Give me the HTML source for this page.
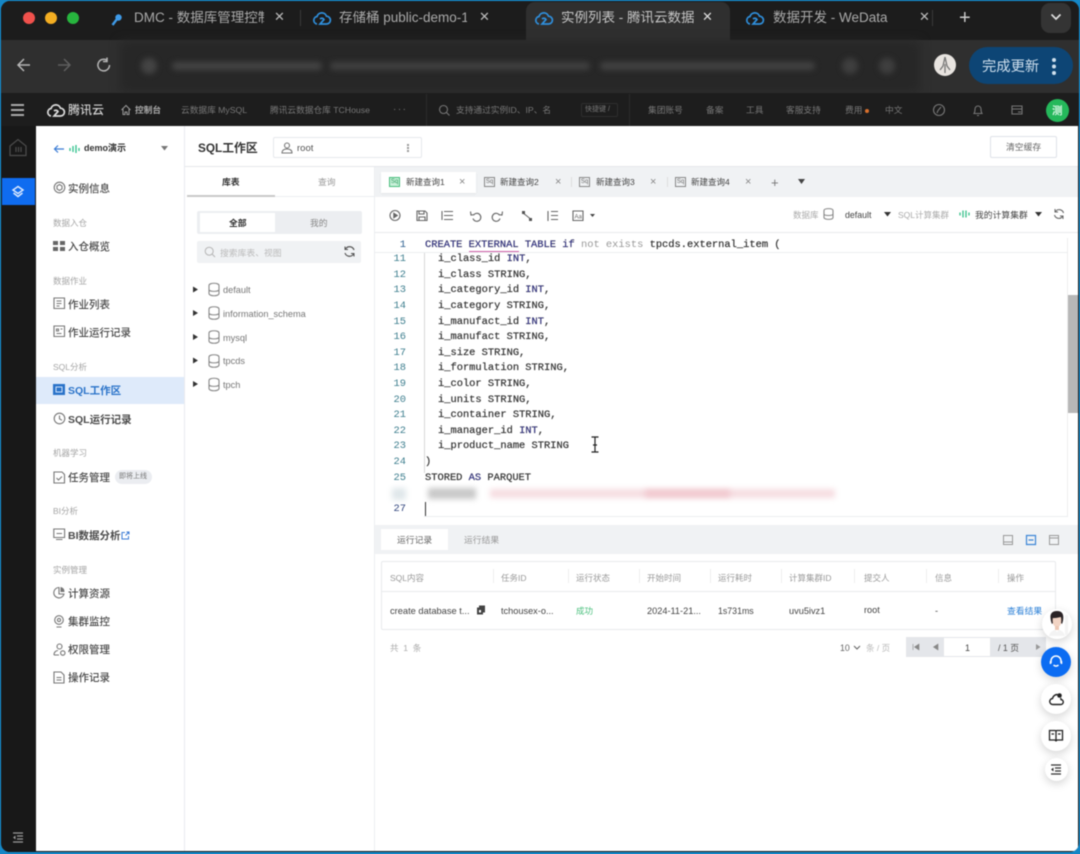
<!DOCTYPE html>
<html lang="zh"><head><meta charset="utf-8"><title>实例列表 - 腾讯云数据仓库</title>
<style>
*{box-sizing:border-box}
html,body{margin:0;padding:0;width:1080px;height:854px;overflow:hidden;background:#1587c6}
body{font-family:"Liberation Sans","Noto Sans CJK SC",sans-serif;position:relative}
#w{position:absolute;left:1px;top:1px;width:1078px;height:851px;background:#1b1b1b;border-radius:9px;overflow:hidden;filter:blur(.55px)}
#a{position:absolute;left:-1px;top:-1px;width:1080px;height:854px}
.t,.b{position:absolute;white-space:nowrap}
.t{line-height:14px}
.tab{color:#a9a9a9;font-size:13.5px;margin-top:1px}
.nav{color:#777;font-size:8.7px}
.m{color:#4a4a4a;font-size:10.5px;left:68px;font-weight:500;margin-top:1px}
.g{color:#a4a4a4;font-size:8.5px;left:53px}
.db{color:#777;font-size:9.2px;left:223px}
.q{color:#444;font-size:8.5px}
.x{color:#888;font-size:11px}
.c{font-family:"Liberation Mono",monospace;font-size:10.4px;color:#333;left:425px;line-height:15.6px;-webkit-text-stroke:.2px #333;margin-top:1.3px}
.n{font-family:"Liberation Mono",monospace;font-size:10.4px;color:#3f7f8f;left:387px;width:19px;text-align:right;line-height:15.6px;margin-top:1.3px}
.k{color:#2e2e9c}
.h{color:#999;font-size:8.5px}
.d{color:#444;font-size:9.2px}
svg{position:absolute;overflow:visible}
.i{fill:none;stroke:#777;stroke-width:1.1}
.fab{position:absolute;border-radius:50%;background:#fff;box-shadow:0 3px 9px rgba(0,0,0,.17)}
</style></head><body>
<div id="w"><div id="a">

<!-- tab strip -->
<div class="b" style="left:0;top:0;width:1080px;height:40px;background:#1c1c1c"></div>
<div class="b" style="left:23px;top:12px;width:12px;height:12px;border-radius:50%;background:#f0514c"></div>
<div class="b" style="left:45px;top:12px;width:12px;height:12px;border-radius:50%;background:#f4ae22"></div>
<div class="b" style="left:67px;top:12px;width:12px;height:12px;border-radius:50%;background:#27b53e"></div>
<svg style="left:109px;top:12px" width="16" height="16"><circle cx="9.5" cy="5.5" r="3.2" fill="#3f9be8"/><path d="M8 7 3.5 13" stroke="#3f9be8" stroke-width="2.4" fill="none"/></svg>
<div class="t tab" style="left:134px;top:10px;width:130px;overflow:hidden">DMC - 数据库管理控制台</div>
<div class="t" style="left:274px;top:10px;color:#bbb;font-size:13px">✕</div>
<div class="b" style="left:300px;top:10px;width:1px;height:16px;background:#3a3a3a"></div>
<svg style="left:312px;top:10px" width="20" height="16"><path d="M5 14a3.800 3.800 0 0 1 0-7.500 5 5 0 0 1 9.500-.3 3.900 3.900 0 0 1 0 7.800H8l4-4.500a2.500 2.500 0 0 0-4-.5" fill="none" stroke="#2f8fdc" stroke-width="1.700"/></svg>
<div class="t tab" style="left:339px;top:10px;width:128px;overflow:hidden">存储桶 public-demo-1</div>
<div class="t" style="left:479px;top:10px;color:#bbb;font-size:13px">✕</div>
<div class="b" style="left:526px;top:2px;width:204px;height:38px;background:#2f2f2f;border-radius:9px 9px 0 0"></div>
<svg style="left:534px;top:10px" width="20" height="16"><path d="M5 14a3.800 3.800 0 0 1 0-7.500 5 5 0 0 1 9.500-.3 3.900 3.900 0 0 1 0 7.800H8l4-4.500a2.500 2.500 0 0 0-4-.5" fill="none" stroke="#2f8fdc" stroke-width="1.700"/></svg>
<div class="t tab" style="left:561px;top:10px;width:134px;overflow:hidden;color:#c4c4c4">实例列表 - 腾讯云数据仓库</div>
<div class="t" style="left:702px;top:10px;color:#ddd;font-size:13px">✕</div>
<svg style="left:745px;top:10px" width="20" height="16"><path d="M5 14a3.800 3.800 0 0 1 0-7.500 5 5 0 0 1 9.500-.3 3.900 3.900 0 0 1 0 7.800H8l4-4.500a2.500 2.500 0 0 0-4-.5" fill="none" stroke="#2f8fdc" stroke-width="1.700"/></svg>
<div class="t tab" style="left:773px;top:10px">数据开发 - WeData</div>
<div class="t" style="left:919px;top:10px;color:#bbb;font-size:13px">✕</div>
<div class="b" style="left:932px;top:10px;width:1px;height:16px;background:#3a3a3a"></div>
<div class="t" style="left:959px;top:10px;color:#ccc;font-size:20px;line-height:16px">+</div>
<div class="b" style="left:1041px;top:3px;width:30px;height:30px;border-radius:9px;background:#343434"></div>
<svg style="left:1050px;top:13px" width="12" height="8"><path d="M1.500 1.500 6 6l4.500-4.500" fill="none" stroke="#ddd" stroke-width="1.700"/></svg>

<!-- toolbar -->
<div class="b" style="left:0;top:40px;width:1080px;height:53px;background:#2f2f2f"></div>
<svg style="left:16px;top:57px" width="16" height="16"><path d="M14 8H2.500M8 2 2 8l6 6" fill="none" stroke="#b5b5b5" stroke-width="1.500"/></svg>
<svg style="left:56px;top:57px" width="16" height="16"><path d="M2 8h11.500M8 2l6 6-6 6" fill="none" stroke="#5e5e5e" stroke-width="1.500"/></svg>
<svg style="left:96px;top:57px" width="16" height="16"><path d="M13.500 8A5.800 5.800 0 1 1 11 3.300M11 .5v4H7" fill="none" stroke="#b5b5b5" stroke-width="1.500"/></svg>
<div class="b" style="left:120px;top:41px;width:800px;height:51px;background:#272727;filter:blur(5px)"></div>
<div class="b" style="left:141px;top:58px;width:16px;height:16px;border-radius:50%;background:#444;filter:blur(3px)"></div>
<div class="b" style="left:172px;top:62px;width:150px;height:8px;border-radius:4px;background:#444;filter:blur(3px)"></div>
<div class="b" style="left:330px;top:62px;width:260px;height:8px;border-radius:4px;background:#404040;filter:blur(3px)"></div>
<div class="b" style="left:600px;top:62px;width:215px;height:8px;border-radius:4px;background:#424242;filter:blur(3px)"></div>
<div class="b" style="left:842px;top:58px;width:16px;height:16px;border-radius:50%;background:#3f3f3f;filter:blur(3px)"></div>
<div class="b" style="left:879px;top:58px;width:16px;height:16px;border-radius:50%;background:#3f3f3f;filter:blur(3px)"></div>
<div class="b" style="left:934px;top:54px;width:22px;height:22px;border-radius:50%;background:#e8e4e0"></div>
<svg style="left:934px;top:54px" width="22" height="22"><path d="M11 3 9 12l-3 4M11 3l2 9 3 4M11 10v9" fill="none" stroke="#777" stroke-width="1.300"/></svg>
<div class="b" style="left:969px;top:47px;width:104px;height:37px;border-radius:19px;background:#0d4575"></div>
<div class="t" style="left:982px;top:57px;margin-top:1.500px;color:#cfe0ee;font-size:14.300px;line-height:17px">完成更新</div>
<div class="b" style="left:1052px;top:58px;width:4px;height:4px;border-radius:50%;background:#cfe0ee;box-shadow:0 6.500px 0 #cfe0ee,0 13px 0 #cfe0ee"></div>

<!-- nav bar -->
<div class="b" style="left:0;top:93px;width:1080px;height:33px;background:#1d1d1d"></div>
<div class="b" style="left:11px;top:104px;width:13px;height:1.500px;background:#aaa;box-shadow:0 5px 0 #aaa,0 10px 0 #aaa"></div>
<svg style="left:46px;top:102px" width="20" height="16"><path d="M5 14a3.800 3.800 0 0 1 0-7.500 5 5 0 0 1 9.500-.3 3.900 3.900 0 0 1 0 7.800H8l4-4.500a2.500 2.500 0 0 0-4-.5" fill="none" stroke="#ddd" stroke-width="1.700"/></svg>
<div class="t" style="left:68px;top:103px;color:#cfcfcf;font-size:12px;font-weight:500">腾讯云</div>
<svg style="left:120px;top:104px" width="12" height="12"><path d="M1.500 6 6 1.500 10.500 6M3 5v5.500h2V8h2v2.500h2V5" fill="none" stroke="#999" stroke-width="1"/></svg>
<div class="t" style="left:135px;top:103px;color:#aaa;font-size:8.700px;font-weight:700">控制台</div>
<div class="t nav" style="left:181px;top:103px">云数据库 MySQL</div>
<div class="t nav" style="left:270px;top:103px">腾讯云数据仓库 TCHouse</div>
<div class="t nav" style="left:393px;top:103px;font-size:10px;letter-spacing:1.500px">···</div>
<div class="b" style="left:426px;top:94px;width:1px;height:32px;background:#2b2b2b"></div>
<svg style="left:438px;top:104px" width="13" height="13"><circle cx="5.500" cy="5.500" r="4" class="i" stroke="#666"/><path d="m8.500 8.500 3 3" class="i"/></svg>
<div class="t nav" style="left:456px;top:103px;width:106px;overflow:hidden">支持通过实例ID、IP、名</div>
<div class="b" style="left:581px;top:103px;width:37px;height:14px;border:1px solid #2e2e2e;border-radius:2px"></div>
<div class="t nav" style="left:585px;top:103px;font-size:7px">快捷键 /</div>
<div class="b" style="left:629px;top:94px;width:1px;height:32px;background:#2b2b2b"></div>
<div class="t nav" style="left:648px;top:103px">集团账号</div>
<div class="t nav" style="left:706px;top:103px">备案</div>
<div class="t nav" style="left:746px;top:103px">工具</div>
<div class="t nav" style="left:786px;top:103px">客服支持</div>
<div class="t nav" style="left:845px;top:103px">费用</div>
<div class="b" style="left:865px;top:109px;width:4px;height:4px;border-radius:50%;background:#d9702c"></div>
<div class="t nav" style="left:885px;top:103px">中文</div>
<svg style="left:932px;top:103px" width="14" height="14"><circle cx="7" cy="7" r="5.500" class="i"/><path d="M9 4 6 7.500 5 10" class="i"/></svg>
<svg style="left:971px;top:103px" width="14" height="14"><path d="M3 10.500c1-1.500 1-2.500 1-4.500a3 3 0 0 1 6 0c0 2 0 3 1 4.500zM6 12.500h2" class="i"/></svg>
<svg style="left:1010px;top:103px" width="14" height="14"><path d="M2 3h10v8H2zM2 6h10M8 9h3" class="i"/></svg>
<div class="b" style="left:1046px;top:99px;width:23px;height:23px;border-radius:50%;background:#25b85b"></div>
<div class="t" style="left:1052px;top:104px;color:#d7f5e3;font-size:10.500px;font-weight:700">测</div>

<!-- left rail -->
<div class="b" style="left:2px;top:126px;width:34px;height:728px;background:#181818"></div>
<svg style="left:9px;top:138px" width="18" height="19"><path d="M1 8 9 1.500 17 8v9.500H1zM7 9v5M9.500 9v5M12 9v5" fill="none" stroke="#4c4c4c" stroke-width="1.200"/></svg>
<div class="b" style="left:2px;top:178px;width:33px;height:27px;background:#0f6cf0"></div>
<svg style="left:11px;top:185px" width="14" height="14"><path d="M7 1.500 12 5 7 8.500 2 5zM2.500 8 7 11.500 11.500 8" fill="none" stroke="#dbe9ff" stroke-width="1.500"/></svg>
<svg style="left:12px;top:832px" width="12" height="11"><path d="M1 1h10M5 4h6M5 7h6M1 10h10" stroke="#999" stroke-width="1.200"/><path d="M3.500 3.500v4L1 5.500z" fill="#999"/></svg>

<!-- sidebar -->
<div class="b" style="left:36px;top:126px;width:149px;height:725px;background:#fff;border-right:1px solid #e8eaef"></div>
<svg style="left:53px;top:144px" width="12" height="10"><path d="M11 5H2M5 1.500 1.500 5 5 8.500" fill="none" stroke="#3a7bd5" stroke-width="1.200"/></svg>
<svg style="left:69px;top:144px" width="11" height="10"><path d="M1 4v3M4 2v6" stroke="#2cc08a" stroke-width="1.300"/><path d="M7 1v8" stroke="#2cc08a" stroke-width="1.300"/><path d="M10 4v3" stroke="#2cc08a" stroke-width="1.300"/></svg>
<div class="t" style="left:84px;top:141px;color:#333;font-size:9px;font-weight:700">demo演示</div>
<svg style="left:161px;top:146px" width="7" height="5"><path d="M0 0h7L3.500 4.500z" fill="#777"/></svg>

<svg style="left:53px;top:181px" width="13" height="13"><circle cx="6.500" cy="6.500" r="5.300" class="i"/><path d="M6.500 3.500 9 5v3L6.500 9.500 4 8V5z" class="i"/></svg>
<div class="t m" style="top:181px">实例信息</div>
<div class="t g" style="top:216px">数据入仓</div>
<svg style="left:53px;top:241px" width="12" height="11"><path d="M0 0h5v4H0zM7 0h5v4H7zM0 6h5v4H0zM7 6h5v4H7z" fill="#666"/></svg>
<div class="t m" style="top:239px">入仓概览</div>
<div class="t g" style="top:274px">数据作业</div>
<svg style="left:53px;top:297px" width="13" height="13"><path d="M1 1h10.500v10.500H1zM3.500 6.500h5M3.500 4h5M3.500 9h3" class="i"/></svg>
<div class="t m" style="top:297px">作业列表</div>
<svg style="left:53px;top:325px" width="13" height="13"><path d="M1 1h10.500v10.500H1zM3.500 4h2v2h-2zM3.500 8.500h5M7.500 4h2" class="i"/></svg>
<div class="t m" style="top:325px">作业运行记录</div>
<div class="t g" style="top:360px">SQL分析</div>
<div class="b" style="left:36px;top:377px;width:148px;height:27px;background:#deeafa"></div>
<svg style="left:53px;top:384px" width="12" height="12"><path d="M0 0h12v11H0z" fill="#2a73c9"/><path d="M3 3v5h6V3z" fill="none" stroke="#cfe2fa" stroke-width="1"/></svg>
<div class="t m" style="top:383px;color:#2a73c9;font-weight:700">SQL工作区</div>
<svg style="left:53px;top:412px" width="13" height="13"><circle cx="6.500" cy="6.500" r="5.300" class="i"/><path d="M6.500 3.500v3.300l2.500 1.500" class="i"/></svg>
<div class="t m" style="top:412px;font-weight:700">SQL运行记录</div>
<div class="t g" style="top:446px">机器学习</div>
<svg style="left:53px;top:471px" width="13" height="13"><path d="M1 1h8l2.500 2.500v8.500H1zM3.500 7 5.500 9l3.500-3.500" class="i"/></svg>
<div class="t m" style="top:470px">任务管理</div>
<div class="b" style="left:115px;top:470px;width:37px;height:14px;border-radius:7px;background:#ebedf1"></div>
<div class="t" style="left:119px;top:470px;color:#777;font-size:7px">即将上线</div>
<div class="t g" style="top:504px">BI分析</div>
<svg style="left:53px;top:528px" width="13" height="13"><path d="M.8 1h10.800v8.500H.8zM3 11.500h6.500M3.500 5.500h5.500" class="i"/></svg>
<div class="t m" style="top:528px;font-weight:700">BI数据分析</div>
<svg style="left:121px;top:531px" width="9" height="9"><path d="M4 1.500H1V8h6.500V5M4.500 4.500 8 1M5.500 1H8v2.500" fill="none" stroke="#3a7bd5" stroke-width="1"/></svg>
<div class="t g" style="top:563px">实例管理</div>
<svg style="left:53px;top:586px" width="12" height="13"><path d="M6 1.500a5.200 5.200 0 1 0 5 6.500H6z" class="i"/><path d="M7.500 1a4.500 4.500 0 0 1 4 5h-4z" fill="#777"/></svg>
<div class="t m" style="top:586px">计算资源</div>
<svg style="left:53px;top:615px" width="12" height="13"><circle cx="6" cy="5" r="4.300" class="i"/><circle cx="6" cy="5" r="1.600" class="i"/><path d="M3.500 12h5" class="i"/></svg>
<div class="t m" style="top:614px">集群监控</div>
<svg style="left:53px;top:643px" width="13" height="13"><circle cx="6.500" cy="3.500" r="2.500" class="i"/><path d="M1 12c0-3 2-4.500 4-4.500M1 12h5" class="i"/><circle cx="9.800" cy="10" r="2.200" class="i"/></svg>
<div class="t m" style="top:642px">权限管理</div>
<svg style="left:53px;top:671px" width="12" height="13"><path d="M1 1h7l3 3v8H1zM3.500 6.500h5M3.500 9h5" class="i"/></svg>
<div class="t m" style="top:670px">操作记录</div>

<!-- white content -->
<div class="b" style="left:185px;top:126px;width:893px;height:725px;background:#fff"></div>
<div class="t" style="left:198px;top:141px;color:#333;font-size:11.800px;font-weight:700">SQL工作区</div>
<div class="b" style="left:273px;top:137px;width:149px;height:21px;border:1px solid #e6e8ec;border-radius:2px"></div>
<svg style="left:281px;top:142px" width="12" height="12"><circle cx="6" cy="3.500" r="2.500" class="i"/><path d="M1 11c0-3 2-4 5-4s5 1 5 4z" class="i"/></svg>
<div class="t" style="left:297px;top:142px;color:#555;font-size:9.500px">root</div>
<div class="b" style="left:407px;top:144px;width:2px;height:2px;background:#999;box-shadow:0 3px 0 #999,0 6px 0 #999"></div>
<div class="b" style="left:990px;top:136px;width:67px;height:22px;border:1px solid #dfe2e8;border-radius:2px"></div>
<div class="t" style="left:1006px;top:140px;color:#666;font-size:8.800px">清空缓存</div>
<div class="b" style="left:185px;top:166px;width:893px;height:1px;background:#e5e7eb"></div>

<!-- db panel -->
<div class="t" style="left:222px;top:175px;color:#333;font-size:8.800px;font-weight:700">库表</div>
<div class="t" style="left:318px;top:175px;color:#999;font-size:8.800px">查询</div>
<div class="b" style="left:187px;top:195px;width:88px;height:2px;background:#c9c9c9"></div>
<div class="b" style="left:275px;top:196px;width:99px;height:1px;background:#eceef1"></div>
<div class="b" style="left:374px;top:167px;width:1px;height:684px;background:#eceef1"></div>
<div class="b" style="left:197px;top:211px;width:165px;height:23px;background:#eceef1;border-radius:2px"></div>
<div class="b" style="left:200px;top:213px;width:75px;height:19px;background:#fff"></div>
<div class="t" style="left:229px;top:216px;color:#333;font-size:8.800px;font-weight:700">全部</div>
<div class="t" style="left:310px;top:216px;color:#888;font-size:8.800px">我的</div>
<div class="b" style="left:197px;top:241px;width:164px;height:22px;background:#f0f2f4;border-radius:2px"></div>
<svg style="left:204px;top:246px" width="12" height="12"><circle cx="5.200" cy="5.200" r="4" fill="none" stroke="#b5b5b5" stroke-width="1"/><path d="m8 8 3 3" stroke="#b5b5b5" stroke-width="1"/></svg>
<div class="t" style="left:220px;top:246px;color:#bbb;font-size:8.800px">搜索库表、视图</div>
<svg style="left:343px;top:245px" width="13" height="13"><path d="M11 5a4.700 4.700 0 0 0-8.500-1M2 8a4.700 4.700 0 0 0 8.500 1" fill="none" stroke="#555" stroke-width="1.200"/><path d="M2 1.500v3h3M11 11.500v-3H8" fill="none" stroke="#555" stroke-width="1"/></svg>

<svg style="left:0;top:0" width="375" height="400">
<g fill="#333"><path d="M193 286.500v6l5-3zM193 310v6l5-3zM193 334v6l5-3zM193 357.500v6l5-3zM193 381v6l5-3z"/></g>
<g fill="none" stroke="#888" stroke-width="1.100">
<path d="M209 285.500c0-3 10-3 10 0v8c0 3-10 3-10 0zM209 289.500c0 2.500 10 2.500 10 0"/>
<path d="M209 309c0-3 10-3 10 0v8c0 3-10 3-10 0zM209 313c0 2.500 10 2.500 10 0"/>
<path d="M209 333c0-3 10-3 10 0v8c0 3-10 3-10 0zM209 337c0 2.500 10 2.500 10 0"/>
<path d="M209 357c0-3 10-3 10 0v8c0 3-10 3-10 0zM209 361c0 2.500 10 2.500 10 0"/>
<path d="M209 380.500c0-3 10-3 10 0v8c0 3-10 3-10 0zM209 384.500c0 2.500 10 2.500 10 0"/>
</g></svg>
<div class="t db" style="top:283px">default</div>
<div class="t db" style="top:307px">information_schema</div>
<div class="t db" style="top:331px">mysql</div>
<div class="t db" style="top:354px">tpcds</div>
<div class="t db" style="top:378px">tpch</div>

<!-- query tabs -->
<div class="b" style="left:375px;top:167px;width:703px;height:30px;background:#f0f2f4"></div>
<div class="b" style="left:381px;top:172px;width:95px;height:21px;background:#fff;box-shadow:0 1px 2px rgba(0,0,0,.06)"></div>
<div class="t" style="left:389px;top:177px;width:11px;height:10px;border:1px solid #47bd7c;background:#c9f0d9;color:#279a5b;font-size:6px;line-height:8px;text-align:center">Sq</div>
<div class="t q" style="left:406px;top:175px">新建查询1</div><div class="t x" style="left:459px;top:175px">×</div>
<div class="t" style="left:484px;top:177px;width:11px;height:10px;border:1px solid #888;color:#666;font-size:6px;line-height:8px;text-align:center">Sq</div>
<div class="t q" style="left:500px;top:175px">新建查询2</div><div class="t x" style="left:555px;top:175px">×</div>
<div class="b" style="left:571px;top:177px;width:1px;height:10px;background:#ddd"></div>
<div class="t" style="left:579px;top:177px;width:11px;height:10px;border:1px solid #888;color:#666;font-size:6px;line-height:8px;text-align:center">Sq</div>
<div class="t q" style="left:596px;top:175px">新建查询3</div><div class="t x" style="left:650px;top:175px">×</div>
<div class="b" style="left:667px;top:177px;width:1px;height:10px;background:#ddd"></div>
<div class="t" style="left:675px;top:177px;width:11px;height:10px;border:1px solid #888;color:#666;font-size:6px;line-height:8px;text-align:center">Sq</div>
<div class="t q" style="left:691px;top:175px">新建查询4</div><div class="t x" style="left:745px;top:175px">×</div>
<div class="t" style="left:771px;top:176px;color:#777;font-size:13px">+</div>
<svg style="left:798px;top:179px" width="8" height="6"><path d="M0 0h7L3.500 5z" fill="#444"/></svg>

<!-- editor toolbar -->
<svg style="left:389px;top:209px" width="210" height="14">
<g fill="none" stroke="#666" stroke-width="1.100">
<circle cx="6" cy="6.500" r="5"/><path d="M4.800 4.300v4.400l3.500-2.200z" fill="#666"/>
<path d="M28 2h8l2 2v7.500H28zM30 2v3h5V2M30 11.500V8h6v3.500"/>
<path d="M55 2.500h9M55 6.500h9M55 10.500h9M53 2v9"/>
<path d="M85 5.500a4 4 0 1 1-1 4M81.500 2.500l.5 3.500 3.500-.3"/>
<path d="M110 5.500a4 4 0 1 0 1 4M113.500 2.500l-.5 3.500-3.500-.3"/>
<path d="M134 4l2 1.500 5 4"/>
<path d="M159 2v10M162 2.500h7M162 6.500h7M162 10.500h7"/>
<path d="M184 2h10v9.500h-10z"/></g>
<text x="185.500" y="9.500" font-size="6" fill="#666" font-family="Liberation Sans">Aa</text>
<path d="M201 5h5l-2.500 3z" fill="#444"/><path d="M133 2h3v3h-3zM140 9h3v3h-3z" fill="#555"/>
</svg>
<div class="t h" style="left:793px;top:208px;color:#aaa">数据库</div>
<svg style="left:823px;top:208px" width="11" height="12"><path d="M1 2.500c0-2.500 9-2.500 9 0v7c0 2.500-9 2.500-9 0zM1 6c0 2 9 2 9 0" fill="none" stroke="#888" stroke-width="1.100"/></svg>
<div class="t" style="left:845px;top:208px;color:#444;font-size:8.800px;font-weight:500">default</div>
<svg style="left:884px;top:212px" width="7" height="5"><path d="M0 0h7L3.500 4.500z" fill="#333"/></svg>
<div class="t h" style="left:898px;top:208px;color:#aaa">SQL计算集群</div>
<svg style="left:959px;top:209px" width="11" height="10"><path d="M1 3.500v3M4 1.500v7M7 1.500v7M10 3.500v3" stroke="#36c08a" stroke-width="1.300"/></svg>
<div class="t" style="left:975px;top:208px;color:#444;font-size:8.800px">我的计算集群</div>
<svg style="left:1035px;top:212px" width="7" height="5"><path d="M0 0h7L3.500 4.500z" fill="#333"/></svg>
<svg style="left:1053px;top:208px" width="12" height="12"><path d="M10.500 5A4.500 4.500 0 0 0 2.500 3.500M1.500 7a4.500 4.500 0 0 0 8 1.500" fill="none" stroke="#666" stroke-width="1.100"/><path d="M2 1v3h3M10 11V8H7" fill="none" stroke="#666" stroke-width="1"/></svg>
<div class="b" style="left:375px;top:232px;width:703px;height:1px;background:#e8eaed"></div>

<!-- editor -->
<div class="b" style="left:375px;top:252px;width:692px;height:1px;background:#eceef0"></div>
<div class="b" style="left:424px;top:253px;width:1px;height:220px;background:#d8d8d8"></div>
<div class="t n" style="top:237px;color:#2c5f8f">1</div>
<div class="t c" style="top:237px"><span style="color:#2e2e9c">CREATE</span> <span style="color:#2e2e9c;border-bottom:1px solid #cf5fa8">EXTERNAL</span> <span style="color:#2e2e9c">TABLE</span> <span style="color:#2e2e9c">if</span> <span style="color:#999;-webkit-text-stroke:0">not exists</span> tpcds.external_item (</div>
<div class="t n" style="top:251px">11</div><div class="t c" style="top:251px;left:438px">i_class_id <span class="k">INT</span>,</div>
<div class="t n" style="top:266.600px">12</div><div class="t c" style="top:266.600px;left:438px">i_class STRING,</div>
<div class="t n" style="top:282.200px">13</div><div class="t c" style="top:282.200px;left:438px">i_category_id <span class="k">INT</span>,</div>
<div class="t n" style="top:297.800px">14</div><div class="t c" style="top:297.800px;left:438px">i_category STRING,</div>
<div class="t n" style="top:313.400px">15</div><div class="t c" style="top:313.400px;left:438px">i_manufact_id <span class="k">INT</span>,</div>
<div class="t n" style="top:329px">16</div><div class="t c" style="top:329px;left:438px">i_manufact STRING,</div>
<div class="t n" style="top:344.600px">17</div><div class="t c" style="top:344.600px;left:438px">i_size STRING,</div>
<div class="t n" style="top:360.200px">18</div><div class="t c" style="top:360.200px;left:438px">i_formulation STRING,</div>
<div class="t n" style="top:375.800px">19</div><div class="t c" style="top:375.800px;left:438px">i_color STRING,</div>
<div class="t n" style="top:391.400px">20</div><div class="t c" style="top:391.400px;left:438px">i_units STRING,</div>
<div class="t n" style="top:407px">21</div><div class="t c" style="top:407px;left:438px">i_container STRING,</div>
<div class="t n" style="top:422.600px">22</div><div class="t c" style="top:422.600px;left:438px">i_manager_id <span class="k">INT</span>,</div>
<div class="t n" style="top:438.200px">23</div><div class="t c" style="top:438.200px;left:438px">i_product_name STRING</div>
<div class="t n" style="top:453.800px">24</div><div class="t c" style="top:453.800px">)</div>
<div class="t n" style="top:469.400px">25</div><div class="t c" style="top:469.400px">STORED <span class="k">AS</span> PARQUET</div>
<div class="b" style="left:392px;top:488px;width:14px;height:12px;background:#dfe7ea;filter:blur(3px)"></div>
<div class="b" style="left:428px;top:488px;width:48px;height:11px;background:#c8c8c8;filter:blur(3px)"></div>
<div class="b" style="left:490px;top:489px;width:345px;height:9px;background:#f6dde1;filter:blur(3px)"></div>
<div class="b" style="left:645px;top:490px;width:85px;height:7px;background:#f1c7ce;filter:blur(3px)"></div>
<div class="t n" style="top:501px;color:#33477f">27</div>
<div class="b" style="left:425px;top:502px;width:1px;height:14px;background:#333"></div>
<div class="b" style="left:424px;top:516px;width:644px;height:1px;background:#eceef0"></div>
<svg style="left:590px;top:436px" width="10" height="17"><path d="M1.500 1h7M5 1v15M1.500 16h7M3 9h4" fill="none" stroke="#222" stroke-width="1.200"/></svg>
<div class="b" style="left:1067px;top:295px;width:11px;height:118px;background:#b7b7b7"></div>
<div class="b" style="left:1067px;top:238px;width:1px;height:278px;background:#eee"></div>

<!-- result panel -->
<div class="b" style="left:375px;top:525px;width:703px;height:29px;background:#f0f2f4"></div>
<div class="b" style="left:381px;top:529px;width:67px;height:21px;background:#fff"></div>
<div class="t" style="left:397px;top:533px;color:#666;font-size:8.800px">运行记录</div>
<div class="t" style="left:464px;top:533px;color:#999;font-size:8.800px">运行结果</div>
<svg style="left:1003px;top:535px" width="60" height="11"><g fill="none" stroke-width="1"><path d="M.5.500h9v9h-9zM.5 7h9" stroke="#999"/><path d="M23.500.500h9v9h-9zM25.500 5h5" stroke="#3c86d6" stroke-width="1.200"/><path d="M46.500.500h9v9h-9zM46.500 3h9" stroke="#999"/></g></svg>

<div class="b" style="left:381px;top:561px;width:675px;height:69px;border:1px solid #e8eaed;border-radius:2px"></div>
<div class="b" style="left:382px;top:591px;width:673px;height:1px;background:#e8eaed"></div>
<div class="b" style="left:493px;top:569px;width:1px;height:14px;background:#eee;box-shadow:75px 0 0 #eee,146px 0 0 #eee,217px 0 0 #eee,288px 0 0 #eee,361px 0 0 #eee,433px 0 0 #eee,505px 0 0 #eee"></div>
<div class="t h" style="left:390px;top:571px">SQL内容</div>
<div class="t h" style="left:501px;top:571px">任务ID</div>
<div class="t h" style="left:576px;top:571px">运行状态</div>
<div class="t h" style="left:647px;top:571px">开始时间</div>
<div class="t h" style="left:718px;top:571px">运行耗时</div>
<div class="t h" style="left:789px;top:571px">计算集群ID</div>
<div class="t h" style="left:864px;top:571px">提交人</div>
<div class="t h" style="left:935px;top:571px">信息</div>
<div class="t h" style="left:1007px;top:571px">操作</div>
<div class="t d" style="left:390px;top:604px;font-size:9.300px">create database t...</div>
<svg style="left:476px;top:605px" width="10" height="10"><path d="M3.500 3V1h5v6H6.500M1.500 3h5v6h-5z" fill="#444" stroke="#444" stroke-width="1"/><path d="M3 5h2v2.500H3z" fill="#fff"/></svg>
<div class="t d" style="left:501px;top:604px">tchousex-o...</div>
<div class="t d" style="left:576px;top:604px;color:#49bf7c;font-size:8.500px">成功</div>
<div class="t d" style="left:647px;top:604px">2024-11-21...</div>
<div class="t d" style="left:718px;top:604px;font-size:8.800px">1s731ms</div>
<div class="t d" style="left:789px;top:604px">uvu5ivz1</div>
<div class="t d" style="left:864px;top:603px">root</div>
<div class="t d" style="left:935px;top:604px">-</div>
<div class="t d" style="left:1007px;top:604px;color:#2a7fd6;font-size:8.800px">查看结果</div>
<div class="t" style="left:390px;top:641px;color:#aaa;font-size:8.500px;letter-spacing:1.200px">共 1 条</div>
<div class="t" style="left:840px;top:641px;color:#666;font-size:8.800px">10</div>
<svg style="left:853px;top:645px" width="8" height="6"><path d="M1 1l3 3 3-3" fill="none" stroke="#666" stroke-width="1.100"/></svg>
<div class="t" style="left:866px;top:641px;color:#bbb;font-size:8.500px">条 / 页</div>
<div class="b" style="left:906px;top:637px;width:140px;height:20px;background:#e4e6ea"></div>
<div class="b" style="left:943px;top:637px;width:48px;height:20px;background:#fff;border:1px solid #e4e6ea"></div>
<div class="t" style="left:965px;top:641px;color:#444;font-size:9px">1</div>
<div class="t" style="left:998px;top:641px;color:#555;font-size:8.800px">/ 1 页</div>
<svg style="left:912px;top:642px" width="130" height="10"><path d="M1 2v6M7 2v6L2.500 5zM26 2v6l-4.500-3z" fill="#888" stroke="#888" stroke-width=".6"/><path d="M124 2v6l4.500-3z" fill="#999"/></svg>

<!-- floating -->
<div class="fab" style="left:1042px;top:609px;width:30px;height:30px"></div>
<svg style="left:1042px;top:609px" width="30" height="30">
<path d="M15 2c-5 0-7 3-6.500 7 .3 3 1 5 1.500 6l1-1c0-3 1-5 4-5s4 2 4 5l1 1c.7-1.500 1.200-3.500 1.300-6C21.500 5 20 2 15 2z" fill="#2a2326"/>
<path d="M10.800 9c1.500.3 6-.5 8-1 .5 1 .7 4 .2 6.500-.5 2-2 3.500-4 3.500s-3.500-1.500-4-3.500c-.5-1.800-.5-4-.2-5.500z" fill="#f2d4c4"/>
<path d="M13 17h4v4h-4z" fill="#edc8b5"/>
<path d="M7 27c1-4 4-6 6-6l2 2 2-2c2 0 5 2 6 6z" fill="#f3f3f3"/>
<path d="M23 6h3v20h-3z" fill="#ececec" opacity=".6"/>
</svg>
<div class="fab" style="left:1041px;top:647px;width:30px;height:30px;background:#0b6cf2"></div>
<svg style="left:1048px;top:654px" width="16" height="16"><path d="M3 9V7a5 5 0 0 1 10 0v2M2.500 7v3M13.500 7v3M5.500 11c1.500 1.500 3.500 1.500 5 0" fill="none" stroke="#fff" stroke-width="1.500"/></svg>
<div class="fab" style="left:1041px;top:684px;width:30px;height:30px"></div>
<svg style="left:1048px;top:691px" width="16" height="16"><path d="M5 13.500a3 3 0 0 1-.5-6 5 5 0 0 1 5-4M5 13.500h7.500a2.500 2.500 0 0 0 .5-5 3 3 0 0 0-.5-1.500" fill="none" stroke="#222" stroke-width="1.400"/><circle cx="11.500" cy="4.500" r="2.300" fill="#222"/></svg>
<div class="fab" style="left:1041px;top:721px;width:30px;height:30px"></div>
<svg style="left:1048px;top:728px" width="16" height="16"><path d="M1.500 2.500h5.500c.6 0 1 .5 1 1 0-.5.400-1 1-1h5.500v9.500h-5c-.8 0-1.500.5-1.500 1.500 0-1-.7-1.500-1.500-1.500h-5zM8 3.500v10M3.500 6h2.500M10 6h2.500" fill="none" stroke="#222" stroke-width="1.300"/></svg>
<div class="fab" style="left:1045px;top:758px;width:23px;height:23px"></div>
<svg style="left:1050px;top:764px" width="13" height="11"><path d="M1 1h10M5 4h6M5 7h6M1 10h10" stroke="#333" stroke-width="1.200"/><path d="M3.500 3.500v4L1 5.500z" fill="#333"/></svg>

</div></div>
</body></html>
